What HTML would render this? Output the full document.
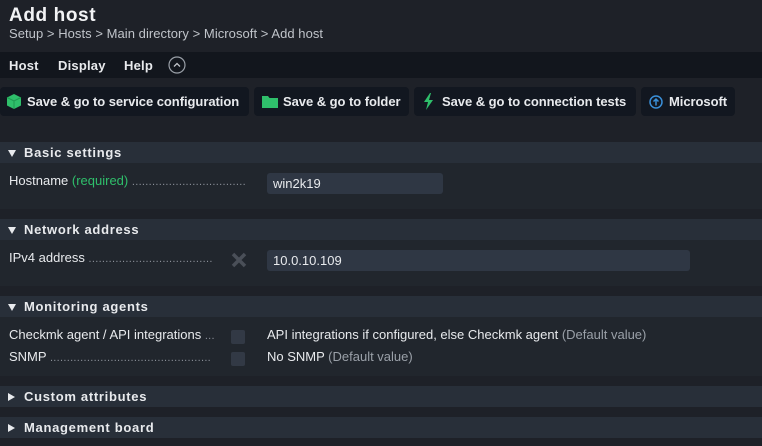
<!DOCTYPE html>
<html><head><meta charset="utf-8"><style>
*{margin:0;padding:0;box-sizing:border-box}
body{width:762px;height:446px;background:#1e2128;font-family:"Liberation Sans",sans-serif;color:#e8eaed;position:relative;overflow:hidden;font-size:13px}
.abs{position:absolute}
.hdr{left:0;top:0;width:762px;height:52px;background:#1e2128}
h1{position:absolute;left:9px;top:5px;font-size:19px;font-weight:bold;letter-spacing:.6px;color:#f2f3f5}
.bc{left:9px;top:26px;font-size:13px;color:#c0c4ca;letter-spacing:.05px}
.menu{left:0;top:52px;width:762px;height:26px;background:#12161d}
.menu span{position:absolute;top:6px;font-weight:bold;font-size:13px;letter-spacing:.2px}
.btn{top:87px;height:29px;background:#121720;border-radius:4px;font-weight:bold;font-size:13px;line-height:30px;white-space:nowrap;letter-spacing:-.05px}
.sh{left:0;width:762px;height:21px;background:#282f39;font-weight:bold;font-size:13px;letter-spacing:.7px;line-height:22px}
.sh b{position:absolute;left:24px}
.tri{position:absolute;left:8px;top:8px;width:0;height:0}
.down{border-left:4.5px solid transparent;border-right:4.5px solid transparent;border-top:7px solid #e8eaed}
.right{border-top:4.5px solid transparent;border-bottom:4.5px solid transparent;border-left:7px solid #e8eaed;top:7px}
.sb{left:0;width:762px;background:#21262d}
.lbl{font-size:13px;color:#e8eaed}
.dots{color:#8b9099;font-size:11px;letter-spacing:.3px}
.inp{background:#2f3744;border-radius:3px;height:21px;line-height:22px;padding-left:6px;font-size:13px}
.cb{width:14px;height:14px;background:#323945;border-radius:2px}
.grey{color:#9aa0a8}
</style></head><body>
<div class="abs hdr"></div>
<h1>Add host</h1>
<div class="abs bc">Setup &gt; Hosts &gt; Main directory &gt; Microsoft &gt; Add host</div>
<div class="abs menu"><span style="left:9px">Host</span><span style="left:58px">Display</span><span style="left:124px">Help</span>
<svg class="abs" style="left:168px;top:4px" width="18" height="18"><circle cx="9" cy="9" r="8" fill="none" stroke="#9aa0a8" stroke-width="1.2"/><path d="M6 10.5 L9 7.5 L12 10.5" fill="none" stroke="#c0c4ca" stroke-width="1.3"/></svg></div>

<div class="abs btn" style="left:0;width:249px"><svg class="abs" style="left:6px;top:7px" width="16" height="15"><path d="M8 0 L15 3.5 L15 11.5 L8 15 L1 11.5 L1 3.5Z" fill="#2fbf6b"/><path d="M1 3.5 L8 7 L15 3.5 M8 7 V15" stroke="#1f9a52" fill="none"/></svg><span style="position:absolute;left:27px">Save &amp; go to service configuration</span></div>
<div class="abs btn" style="left:254px;width:155px"><svg class="abs" style="left:8px;top:9px" width="16" height="12"><path d="M0 0 H6 L7.5 2 H16 V12 H0Z" fill="#2fbf6b"/></svg><span style="position:absolute;left:29px">Save &amp; go to folder</span></div>
<div class="abs btn" style="left:414px;width:222px"><svg class="abs" style="left:9px;top:6px" width="12" height="17"><path d="M7 0 L1 9 H5 L3 17 L10 7 H6 L8 0Z" fill="#2fbf6b"/></svg><span style="position:absolute;left:28px">Save &amp; go to connection tests</span></div>
<div class="abs btn" style="left:641px;width:94px"><svg class="abs" style="left:8px;top:8px" width="14" height="14"><circle cx="7" cy="7" r="6" fill="none" stroke="#3a8fd8" stroke-width="1.5"/><path d="M7 10.5 V4 M4.5 6.5 L7 4 L9.5 6.5" fill="none" stroke="#3a8fd8" stroke-width="1.5"/></svg><span style="position:absolute;left:28px">Microsoft</span></div>

<div class="abs sh" style="top:142px"><i class="tri down"></i><b>Basic settings</b></div>
<div class="abs sb" style="top:163px;height:46px"></div>
<div class="abs lbl" style="left:9px;top:173px">Hostname <span style="color:#2fbf6b">(required)</span> <span class="dots">..................................</span></div>
<div class="abs inp" style="left:267px;top:173px;width:176px">win2k19</div>

<div class="abs sh" style="top:219px"><i class="tri down"></i><b>Network address</b></div>
<div class="abs sb" style="top:240px;height:46px"></div>
<div class="abs lbl" style="left:9px;top:250px">IPv4 address <span class="dots">.....................................</span></div>
<svg class="abs" style="left:231px;top:252px" width="16" height="16"><path d="M2 2 L14 14 M14 2 L2 14" stroke="#4a4f58" stroke-width="3.5"/></svg>
<div class="abs inp" style="left:267px;top:250px;width:423px">10.0.10.109</div>

<div class="abs sh" style="top:296px"><i class="tri down"></i><b>Monitoring agents</b></div>
<div class="abs sb" style="top:317px;height:59px"></div>
<div class="abs lbl" style="left:9px;top:327px">Checkmk agent / API integrations <span class="dots">...</span></div>
<div class="abs cb" style="left:231px;top:330px"></div>
<div class="abs lbl" style="left:267px;top:327px">API integrations if configured, else Checkmk agent <span class="grey">(Default value)</span></div>
<div class="abs lbl" style="left:9px;top:349px">SNMP <span class="dots">................................................</span></div>
<div class="abs cb" style="left:231px;top:352px"></div>
<div class="abs lbl" style="left:267px;top:349px">No SNMP <span class="grey">(Default value)</span></div>

<div class="abs sh" style="top:386px"><i class="tri right"></i><b>Custom attributes</b></div>
<div class="abs sh" style="top:417px"><i class="tri right"></i><b>Management board</b></div>
</body></html>
